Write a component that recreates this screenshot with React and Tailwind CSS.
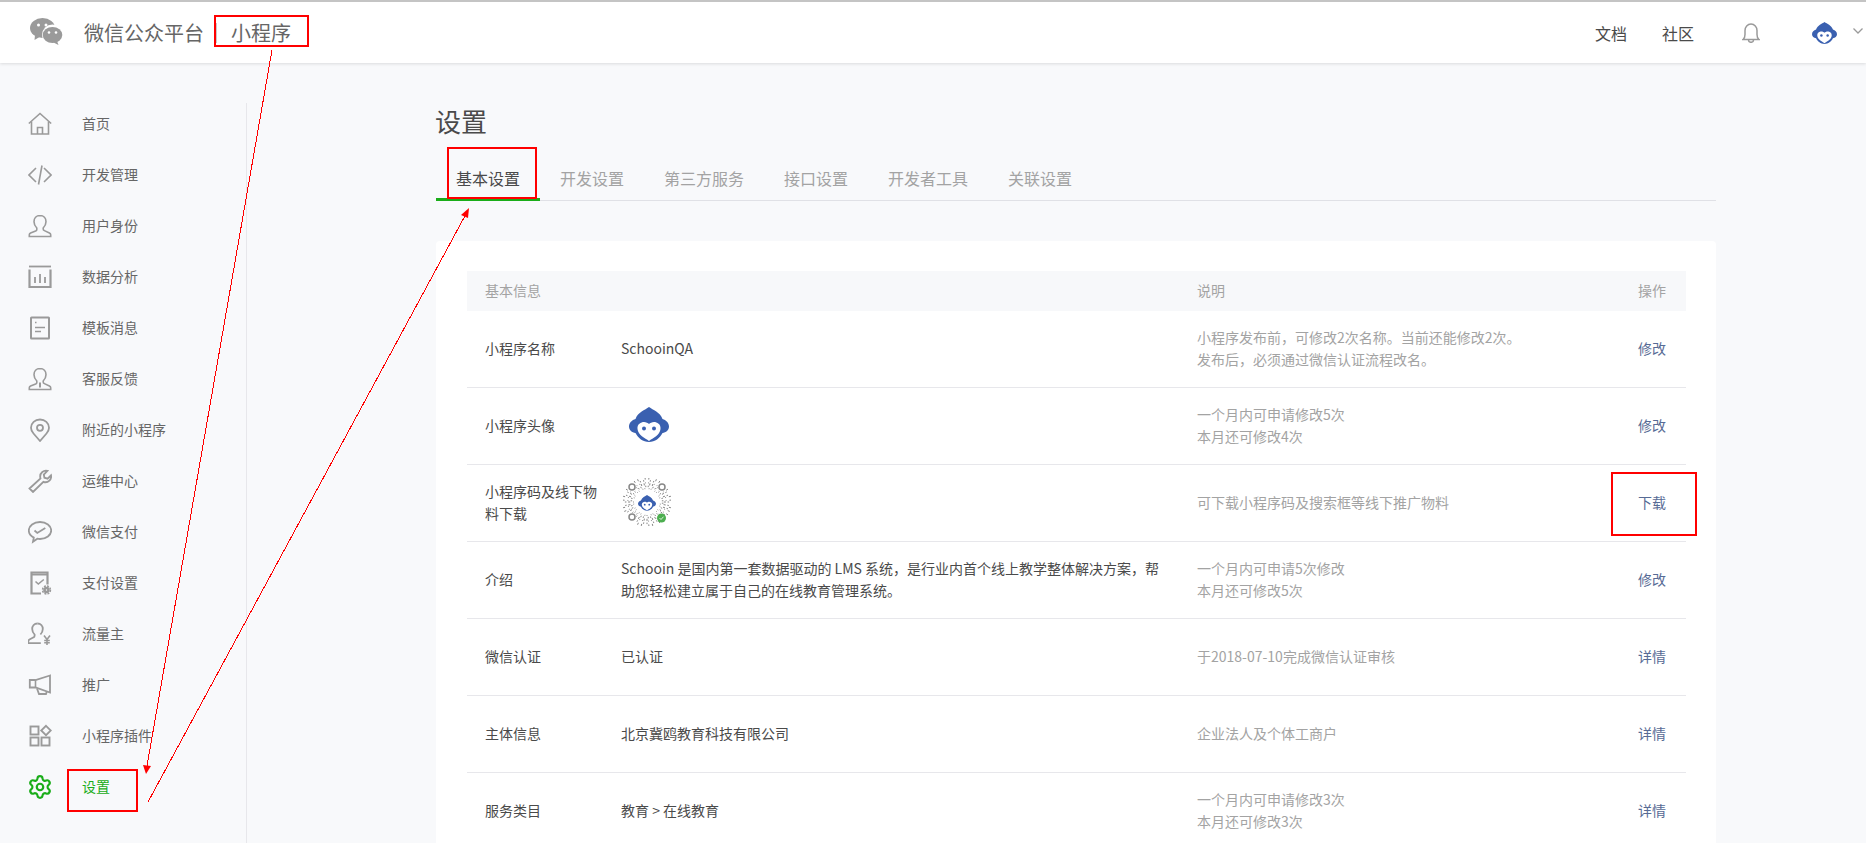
import { Settings } from 'lucide-react';

const FONT = "font-['Noto_Sans_CJK_SC','Liberation_Sans',sans-serif]";

// sidebar icons, all on a 24 box
const USER_PATH = 'M12 1.500c-3.800 0-6 2.800-6 6.300 0 2.600 1.200 4.600 2.800 6.200v1.400c0 .8-.4 1.300-1.200 1.700L2.600 19c-.8.400-1.300 1-1.300 1.800v1.700h21.400v-1.700c0-.8-.5-1.400-1.300-1.800l-5-2.400c-.8-.4-1.200-.9-1.200-1.700V14c1.600-1.600 2.800-3.600 2.800-6.200 0-3.500-2.200-6.300-6-6.300z';

const icons = {
  home: (
    <>
      <path d="M.8 11.500 12 1.500l11.200 10" />
      <path d="M3.500 9.500V22h17V9.500" />
      <path d="M9.500 22v-6.500h5V22" />
    </>
  ),
  code: (
    <>
      <path d="M8 5l-7 7 7 7" />
      <path d="M16 5l7 7-7 7" />
      <path d="M14 2.500 10.500 21.500" />
    </>
  ),
  user: <path d={USER_PATH} />,
  chart: (
    <>
      <path d="M1 1.500h22" strokeWidth="1.800" />
      <path d="M1.500 4.500v17.500h21V4.500" strokeWidth="2.200" />
      <path d="M7 12v6M12 9v9M17 12v6" strokeWidth="1.800" />
    </>
  ),
  template: (
    <>
      <rect x="3" y="1.500" width="18" height="21" rx="0.500" strokeWidth="2" />
      <path d="M7 6.500h1.500M7 11.500h10M7 15.500h6" />
    </>
  ),
  feedback: (
    <>
      <path d={USER_PATH} />
      <path d="M12 15.500v5" strokeWidth="2" />
    </>
  ),
  pin: (
    <>
      <path d="M12 23 5.500 15.500C3.500 13.300 3 11.500 3 9.800 3 4.900 7 1.500 12 1.500s9 3.400 9 8.300c0 1.700-.5 3.500-2.500 5.700z" strokeWidth="1.800" />
      <circle cx="12" cy="9.800" r="3" strokeWidth="1.800" />
    </>
  ),
  wrench: <path d="M1.500 19.500 12.500 9.500c-.8-2.800 0-5 1.800-6.500 1.500-1.300 3.500-1.700 5.200-1.200L15.800 5.500l.6 3.200 3.200 1 3.400-3.400c.4 2-.2 4-1.600 5.300-1.700 1.600-4 2-6 1.200L5 23z" strokeWidth="1.800" />,
  pay: (
    <>
      <path d="M12 2C5.800 2 .8 5.800.8 10.500c0 3 2 5.600 5 7.100L5 21.800l4.300-3.100c.9.200 1.800.3 2.700.3 6.200 0 11.200-3.800 11.200-8.500S18.200 2 12 2z" strokeWidth="1.800" />
      <path d="M6.500 10.500l2.800 2.500 8-5" strokeWidth="1.800" />
    </>
  ),
  paySetting: (
    <>
      <path d="M13 22.500H3.500V1.500h16v12" strokeWidth="2.200" />
      <path d="M3.500 3.500h16" strokeWidth="2" />
      <path d="M7.500 10.500l2.800 2.500 5.500-4.500" />
      <circle cx="18.500" cy="19" r="2" strokeWidth="2.600" />
      <circle cx="18.500" cy="19" r="4" strokeWidth="1.400" strokeDasharray="2 1.150" />
    </>
  ),
  traffic: (
    <>
      <path d="M9.500 1.500c-3.300 0-5.300 2.500-5.300 5.500 0 2.300 1 4 2.400 5.500v1.300c0 .7-.3 1.200-1 1.500L1.500 17.500C.7 18 .3 18.500.3 19.200v2h12.500" strokeWidth="1.800" />
      <path d="M9.500 1.500c3.300 0 5.300 2.500 5.300 5.500 0 2.300-1 4-2.400 5.500" strokeWidth="1.800" />
      <path d="M16 13.500l3 4 3-4M19 17.500V23M16.200 18.500h5.600M16.200 20.800h5.600" strokeWidth="1.600" />
    </>
  ),
  promo: (
    <>
      <path d="M22 2.500 7.500 7H1.800v7.500h5.700L22 19.500z" strokeWidth="1.800" />
      <path d="M7.500 7v7.500" />
      <path d="M9 15.500l2 5.500h7l.8-2.500" strokeWidth="1.800" />
    </>
  ),
  plugin: (
    <>
      <rect x="2.500" y="2.500" width="8" height="8" strokeWidth="1.900" />
      <rect x="2.500" y="13.500" width="8" height="8" strokeWidth="1.900" />
      <rect x="13.500" y="13.500" width="8" height="8" strokeWidth="1.900" />
      <path d="M18 1.800 22.800 6.500 18 11.200 13.200 6.500z" strokeWidth="1.800" />
    </>
  ),
};

const menu = [
  ['首页', 'home'],
  ['开发管理', 'code'],
  ['用户身份', 'user'],
  ['数据分析', 'chart'],
  ['模板消息', 'template'],
  ['客服反馈', 'feedback'],
  ['附近的小程序', 'pin'],
  ['运维中心', 'wrench'],
  ['微信支付', 'pay'],
  ['支付设置', 'paySetting'],
  ['流量主', 'traffic'],
  ['推广', 'promo'],
  ['小程序插件', 'plugin'],
];

const tabs = ['基本设置', '开发设置', '第三方服务', '接口设置', '开发者工具', '关联设置'];

const HEAD = 'M20 0C24 3 31 5 33.500 12 37 13 40 16 40 19.500 40 23 37 25.500 33.500 26 31 31 26 35 20 35 14 35 9 31 6.500 26 3 25.500 0 23 0 19.500 0 16 3 13 6.500 12 9 5 16 3 20 0z';
const FACE = 'M20 34C16 31 9 28 8.500 22 8 17 12 15 15 15 17 15 19 16 20 17 21 16 23 15 25 15 28 15 32 17 31.500 22 31 28 24 31 20 34z';

function MonkeyLogo({ className }) {
  return (
    <svg viewBox="0 0 40 35" className={className}>
      <path d={HEAD} fill="#3a60b0" />
      <path d={FACE} fill="#fff" />
      <circle cx="15" cy="21.500" r="2" fill="#3a60b0" />
      <circle cx="25" cy="21.500" r="2" fill="#3a60b0" />
    </svg>
  );
}

function MiniCode({ className }) {
  // radial dashes of the mini program code
  const ticks = [];
  for (let ring = 0; ring < 6; ring++) {
    const radius = 13 + ring * 1.900;
    for (let i = 0; i < 40; i++) {
      if ((i * 7 + ring * 5) % 3 === 0) continue;
      const angle = ((i + ring * 0.5) * Math.PI) / 20;
      const len = 0.9 + ((i * 3 + ring) % 3) * 0.6;
      ticks.push(
        <line
          key={`${ring}-${i}`}
          x1={24 + Math.cos(angle) * radius}
          y1={24 + Math.sin(angle) * radius}
          x2={24 + Math.cos(angle) * (radius + len)}
          y2={24 + Math.sin(angle) * (radius + len)}
          stroke="#666"
          strokeWidth="0.800"
        />
      );
    }
  }
  return (
    <svg viewBox="0 0 48 48" className={className}>
      {ticks}
      {[[9, 9], [39, 9], [9, 39]].map(([cx, cy]) => (
        <g key={cx + '-' + cy}>
          <circle cx={cx} cy={cy} r="4.500" fill="#fff" />
          <circle cx={cx} cy={cy} r="3" fill="none" stroke="#888" strokeWidth="1.500" />
        </g>
      ))}
      <circle cx="24" cy="24" r="12" fill="#fff" />
      <g transform="translate(15 17) scale(0.45)">
        <path d={HEAD} fill="#3a60b0" />
        <path d={FACE} fill="#fff" />
        <circle cx="15" cy="21.500" r="2" fill="#3a60b0" />
        <circle cx="25" cy="21.500" r="2" fill="#3a60b0" />
      </g>
      <circle cx="38.500" cy="40" r="4.500" fill="#4cae4f" />
      <path d="M36.500 40l1.500 1.500 2.500-2.800" fill="none" stroke="#fff" strokeWidth="0.800" />
    </svg>
  );
}

const rows = [
  { label: '小程序名称', value: 'SchooinQA', desc: ['小程序发布前，可修改2次名称。当前还能修改2次。', '发布后，必须通过微信认证流程改名。'], action: '修改' },
  { label: '小程序头像', value: <MonkeyLogo className="ml-[8px] w-[40px] h-[35px]" />, desc: ['一个月内可申请修改5次', '本月还可修改4次'], action: '修改' },
  { label: '小程序码及线下物料下载', value: <MiniCode className="ml-[2px] w-[48px] h-[48px]" />, desc: ['可下载小程序码及搜索框等线下推广物料'], action: '下载' },
  { label: '介绍', value: 'Schooin 是国内第一套数据驱动的 LMS 系统，是行业内首个线上教学整体解决方案，帮助您轻松建立属于自己的在线教育管理系统。', desc: ['一个月内可申请5次修改', '本月还可修改5次'], action: '修改' },
  { label: '微信认证', value: '已认证', desc: ['于2018-07-10完成微信认证审核'], action: '详情' },
  { label: '主体信息', value: '北京冀鸥教育科技有限公司', desc: ['企业法人及个体工商户'], action: '详情' },
  { label: '服务类目', value: '教育 > 在线教育', desc: ['一个月内可申请修改3次', '本月还可修改3次'], action: '详情' },
];

function Header() {
  return (
    <header className="relative z-10 h-[63px] bg-white border-t-2 border-[#c4c4c4] shadow-[0_1px_3px_rgba(0,0,0,0.12)] flex items-center pl-[30px] pr-[3px] shrink-0">
      <svg viewBox="0 0 33 27" className="w-[33px] h-[27px] -mt-[2px]">
        <ellipse cx="12.500" cy="10" rx="12.500" ry="10" fill="#9a9a9a" />
        <path d="M5 17l-.5 5 5-3z" fill="#9a9a9a" />
        <circle cx="22.500" cy="17" r="10.500" fill="#fff" />
        <ellipse cx="22.500" cy="17" rx="9.800" ry="8" fill="#9a9a9a" />
        <path d="M27 23l1.500 4-5-2.500z" fill="#9a9a9a" />
        <circle cx="8.500" cy="7" r="1.500" fill="#fff" />
        <circle cx="16" cy="7" r="1.500" fill="#fff" />
        <circle cx="19" cy="14.500" r="1.300" fill="#fff" />
        <circle cx="26" cy="14.500" r="1.300" fill="#fff" />
      </svg>
      <span className="ml-[21px] text-[20px] text-[#666]">微信公众平台</span>
      <span className="ml-[12px] w-px h-[20px] bg-[#c9c9c9]" />
      <span className="ml-[14px] text-[20px] text-[#666]">小程序</span>
      <div className="ml-auto flex items-center">
        <span className="text-[16px] text-[#4a4a4a]">文档</span>
        <span className="ml-[35px] text-[16px] text-[#4a4a4a]">社区</span>
        <svg viewBox="0 0 18 20" className="ml-[48px] w-[18px] h-[20px]" fill="none" stroke="#9a9a9a" strokeWidth="1.500">
          <path d="M1 16.500c1.500-1 2-2.500 2-5V7.500C3 4 5.500 1 9 1s6 3 6 6.500v4c0 2.500.5 4 2 5z" />
          <path d="M6.500 17c0 1.500 1 2.300 2.500 2.300s2.500-.8 2.500-2.300" />
        </svg>
        <MonkeyLogo className="ml-[52px] w-[25px] h-[22px]" />
        <svg viewBox="0 0 10 6" className="ml-[16px] w-[10px] h-[6px] -mt-[4px]" fill="none" stroke="#9a9a9a" strokeWidth="1.300">
          <path d="M.5.500 5 5 9.500.500" />
        </svg>
      </div>
    </header>
  );
}

function Sidebar() {
  return (
    <aside className="w-[247px] shrink-0 pt-[40px]">
      <div className="border-r border-[#e7e7eb] h-full">
        {menu.map(([name, icon]) => (
          <div key={name} className="h-[42px] mb-[9px] pl-[28px] flex items-center">
            <svg viewBox="0 0 24 24" className="w-[24px] h-[24px] shrink-0" fill="none" stroke="#9a9a9a" strokeWidth="1.600">
              {icons[icon]}
            </svg>
            <span className="ml-[30px] mb-[2px] text-[14px] text-[#666]">{name}</span>
          </div>
        ))}
        <div className="h-[42px] pl-[27px] flex items-center">
          <Settings size={26} strokeWidth={2} color="#1aad19" className="shrink-0" />
          <span className="ml-[29px] mb-[2px] text-[14px] text-[#1aad19]">设置</span>
        </div>
      </div>
    </aside>
  );
}

function InfoTable() {
  return (
    <div className="bg-white rounded-t-[4px] pt-[30px] pl-[31px] pr-[30px]">
      <div className="grid grid-cols-[154px_576px_441px_48px] h-[40px] items-center bg-[#f7f8fa] text-[14px] text-[#a3a3a3]">
        <span className="pl-[18px] mb-[2px]">基本信息</span>
        <span />
        <span className="mb-[2px]">说明</span>
        <span className="mb-[2px]">操作</span>
      </div>
      {rows.map((row) => (
        <div key={row.label} className="grid grid-cols-[154px_576px_441px_48px] h-[77px] items-center border-b border-[#e7e7eb] text-[14px] leading-[22px]">
          <div className="pl-[18px] pr-[20px] mb-[3px] text-[#4a4a4a]">{row.label}</div>
          <div className="pr-[26px] mb-[3px] text-[#4a4a4a]">{row.value}</div>
          <div className="mb-[3px] text-[#a3a3a3]">
            {row.desc.map((line) => (
              <p key={line}>{line}</p>
            ))}
          </div>
          <a className="mb-[3px] text-[#576b95]">{row.action}</a>
        </div>
      ))}
    </div>
  );
}

// red markup drawn on top of the screenshot
function Annotations() {
  const boxes = [
    'left-[214px] top-[15px] w-[95px] h-[32px]',
    'left-[447px] top-[147px] w-[90px] h-[52px]',
    'left-[1611px] top-[472px] w-[86px] h-[64px]',
    'left-[67px] top-[769px] w-[71px] h-[43px]',
  ];
  return (
    <div className="absolute inset-0 z-20 pointer-events-none">
      {boxes.map((box) => (
        <div key={box} className={`absolute border-2 border-[#ff0000] ${box}`} />
      ))}
      <svg className="absolute left-0 top-0 w-[1866px] h-[843px]" viewBox="0 0 1866 843">
        <path d="M272 50 147 766" stroke="#ff0000" fill="none" shapeRendering="crispEdges" />
        <path d="M146 774 143 765 151 766z" fill="#ff0000" />
        <path d="M148 802 466 214" stroke="#ff0000" fill="none" shapeRendering="crispEdges" />
        <path d="M469 208 461 215 468 218z" fill="#ff0000" />
      </svg>
    </div>
  );
}

export default function App() {
  return (
    <div className={`relative w-[1866px] h-[843px] overflow-hidden bg-[#f8f9fb] flex flex-col ${FONT}`}>
      <Header />
      <div className="flex flex-1 min-h-0">
        <Sidebar />
        <main className="flex-1 pl-[188px] pr-[150px] pt-[40px]">
          <h1 className="text-[26px] leading-[36px] font-normal text-[#4a4a4a]">设置</h1>
          <div className="mt-[18px] ml-px h-[44px] flex border-b border-[#e0e1e6] text-[16px]">
            {tabs.map((tab, i) => (
              <div
                key={tab}
                className={i === 0
                  ? 'px-[20px] h-[44px] leading-[42px] border-b-[3px] border-[#1aad19] text-[#4a4a4a]'
                  : 'px-[20px] h-[44px] leading-[42px] text-[#a3a3a3]'}
              >
                {tab}
              </div>
            ))}
          </div>
          <div className="mt-[40px] ml-px">
            <InfoTable />
          </div>
        </main>
      </div>
      <Annotations />
    </div>
  );
}
